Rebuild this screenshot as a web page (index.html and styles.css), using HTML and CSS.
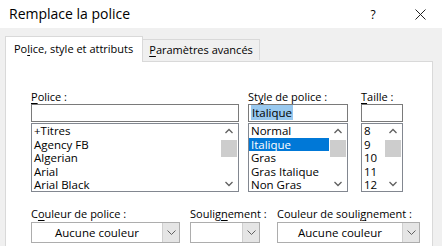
FILE: index.html
```html
<!DOCTYPE html>
<html lang="fr">
<head>
<meta charset="utf-8">
<title>Remplace la police</title>
<link rel="stylesheet" href="styles.css">
</head>
<body>
<div class="window">
  <div class="titlebar">
    <div class="title">Remplace la police</div>
    <div class="controls">
      <span class="help">?</span>
      <svg class="close" width="11" height="11" viewBox="0 0 11 11"><path d="M0.5 0.5 L10.5 10.5 M10.5 0.5 L0.5 10.5" stroke="#222" stroke-width="1" fill="none"/></svg>
    </div>
  </div>
  <div class="body">
    <div class="tabs">
      <div class="tab active">Po<u>l</u>ice, style et attributs</div>
      <div class="tab"><u>P</u>aramètres avancés</div>
    </div>
    <div class="panel">
      <div class="fontrow">
        <div class="col col-font">
          <div class="label"><u>P</u>olice :</div>
          <div class="input"></div>
          <div class="list">
            <div class="items">
              <div class="item">+Titres</div>
              <div class="item">Agency FB</div>
              <div class="item">Algerian</div>
              <div class="item">Arial</div>
              <div class="item">Arial Black</div>
            </div>
            <div class="scroll">
              <svg class="arrow" width="16" height="14" viewBox="0 0 16 14"><polyline points="4.5,9 8,5.5 11.5,9" stroke="#606060" stroke-width="1.3" fill="none"/></svg>
              <div class="thumb"></div>
              <div class="track"></div>
              <svg class="arrow" width="16" height="14" viewBox="0 0 16 14"><polyline points="4.5,5 8,8.5 11.5,5" stroke="#606060" stroke-width="1.3" fill="none"/></svg>
            </div>
          </div>
        </div>
        <div class="col col-style">
          <div class="label">St<u>y</u>le de police :</div>
          <div class="input"><span class="sel">Italique</span></div>
          <div class="list">
            <div class="items">
              <div class="item">Normal</div>
              <div class="item selected">Italique</div>
              <div class="item">Gras</div>
              <div class="item">Gras Italique</div>
              <div class="item">Non Gras</div>
            </div>
            <div class="scroll">
              <svg class="arrow" width="16" height="14" viewBox="0 0 16 14"><polyline points="4.5,9 8,5.5 11.5,9" stroke="#606060" stroke-width="1.3" fill="none"/></svg>
              <div class="thumb"></div>
              <div class="track"></div>
              <svg class="arrow" width="16" height="14" viewBox="0 0 16 14"><polyline points="4.5,5 8,8.5 11.5,5" stroke="#606060" stroke-width="1.3" fill="none"/></svg>
            </div>
          </div>
        </div>
        <div class="col col-size">
          <div class="label"><u>T</u>aille :</div>
          <div class="input"></div>
          <div class="list">
            <div class="items">
              <div class="item">8</div>
              <div class="item">9</div>
              <div class="item">10</div>
              <div class="item">11</div>
              <div class="item">12</div>
            </div>
            <div class="scroll">
              <svg class="arrow" width="16" height="14" viewBox="0 0 16 14"><polyline points="4.5,9 8,5.5 11.5,9" stroke="#606060" stroke-width="1.3" fill="none"/></svg>
              <div class="thumb"></div>
              <div class="track"></div>
              <svg class="arrow" width="16" height="14" viewBox="0 0 16 14"><polyline points="4.5,5 8,8.5 11.5,5" stroke="#606060" stroke-width="1.3" fill="none"/></svg>
            </div>
          </div>
        </div>
      </div>
      <div class="comborow">
        <div class="col col-color">
          <div class="label">C<u>o</u>uleur de police :</div>
          <div class="combo"><span class="value">Aucune couleur</span><span class="btn"><svg width="9" height="5" viewBox="0 0 9 5"><polyline points="0.5,0.5 4.5,4.5 8.5,0.5" stroke="#606060" stroke-width="1" fill="none"/></svg></span></div>
        </div>
        <div class="col col-under">
          <div class="label">Soulig<u>n</u>ement :</div>
          <div class="combo"><span class="value"></span><span class="btn"><svg width="9" height="5" viewBox="0 0 9 5"><polyline points="0.5,0.5 4.5,4.5 8.5,0.5" stroke="#606060" stroke-width="1" fill="none"/></svg></span></div>
        </div>
        <div class="col col-ucolor">
          <div class="label">Couleur de souli<u>g</u>nement :</div>
          <div class="combo"><span class="value">Aucune couleur</span><span class="btn"><svg width="9" height="5" viewBox="0 0 9 5"><polyline points="0.5,0.5 4.5,4.5 8.5,0.5" stroke="#606060" stroke-width="1" fill="none"/></svg></span></div>
        </div>
      </div>
    </div>
  </div>
</div>
</body>
</html>
```
FILE: styles.css
```css
html, body {
  margin: 0;
  padding: 0;
}
body {
  width: 442px;
  height: 246px;
  overflow: hidden;
  background: #f0f0f0;
  font-family: "Open Sans", "Noto Sans", sans-serif;
  font-size: 11px;
  color: #000;
}
.window {
  display: flex;
  flex-direction: column;
  height: 246px;
}
.titlebar {
  height: 28px;
  background: #fff;
  display: flex;
  align-items: center;
  justify-content: space-between;
  padding: 0 0 0 9px;
  flex: none;
}
.title {
  font-size: 14px;
  margin-top: -1px;
}
.controls {
  display: flex;
  align-items: center;
}
.help {
  font-size: 12px;
  width: 46px;
  text-align: center;
  margin-right: 19px;
}
.close {
  margin: 0 16px 0 0;
  display: block;
}
.body {
  flex: 1;
  padding: 8px 9px 0 5px;
  display: flex;
  flex-direction: column;
}
.tabs {
  display: flex;
  align-items: flex-end;
  height: 25px;
  flex: none;
}
.tab {
  border: 1px solid #d9d9d9;
  border-bottom: none;
  padding: 0 6px;
  height: 21px;
  line-height: 20px;
  background: #f0f0f0;
  box-sizing: border-box;
  white-space: nowrap;
}
.tab.active {
  background: #fff;
  height: 26px;
  line-height: 24px;
  padding: 0 9px 0 8px;
  margin-bottom: -1px;
  position: relative;
  z-index: 1;
}
.tab + .tab {
  border-left: none;
  margin-bottom: 1px;
}
.panel {
  flex: 1;
  background: #fff;
  border: 1px solid #d9d9d9;
  border-bottom: none;
  padding: 28px 0 0 25px;
  display: flex;
  flex-direction: column;
}
.fontrow, .comborow {
  display: flex;
}
.label {
  height: 14px;
  line-height: 14px;
  white-space: nowrap;
}
.col-font { width: 208px; margin-right: 9px; }
.col-style { width: 100px; margin-right: 13px; }
.col-size { width: 42px; }
.input {
  height: 18px;
  border: 1px solid #7a7a7a;
  box-sizing: border-box;
  line-height: 15px;
  padding-left: 2px;
  font-size: 11.5px;
}
.sel {
  background: #99c9ef;
  padding: 0 1px;
}
.list {
  margin-top: 1px;
  height: 69px;
  border: 1px solid #828790;
  box-sizing: border-box;
  display: flex;
  overflow: hidden;
}
.items {
  flex: 1;
  padding-top: 0;
  font-size: 11.5px;
}
.item {
  height: 13.6px;
  line-height: 13.6px;
  padding-left: 2px;
  white-space: nowrap;
}
.item.selected {
  background: #0078d7;
  color: #fff;
  margin-right: 1px;
}
.scroll {
  width: 16px;
  display: flex;
  flex-direction: column;
  flex: none;
  margin-right: 1px;
}
.arrow { display: block; flex: none; }
.thumb {
  height: 17px;
  background: #cdcdcd;
  margin: 2px 0 0;
  flex: none;
}
.track { flex: 1; }
.comborow {
  margin-top: 15px;
}
.col-color { width: 149px; margin-right: 10px; }
.col-under { width: 70px; margin-right: 17px; }
.col-ucolor { width: 143px; }
.combo {
  margin-top: 1px;
  height: 21px;
  border: 1px solid #adadad;
  box-sizing: border-box;
  display: flex;
  background: #fff;
}
.value {
  flex: 1;
  text-align: center;
  line-height: 19px;
  white-space: nowrap;
  font-size: 11.5px;
}
.btn {
  width: 16px;
  background: #e5e5e5;
  border-left: 1px solid #cfcfcf;
  display: flex;
  align-items: center;
  justify-content: center;
  flex: none;
}
.btn svg { display: block; }
u { text-decoration-thickness: 1px; text-underline-offset: 2px; }
```
